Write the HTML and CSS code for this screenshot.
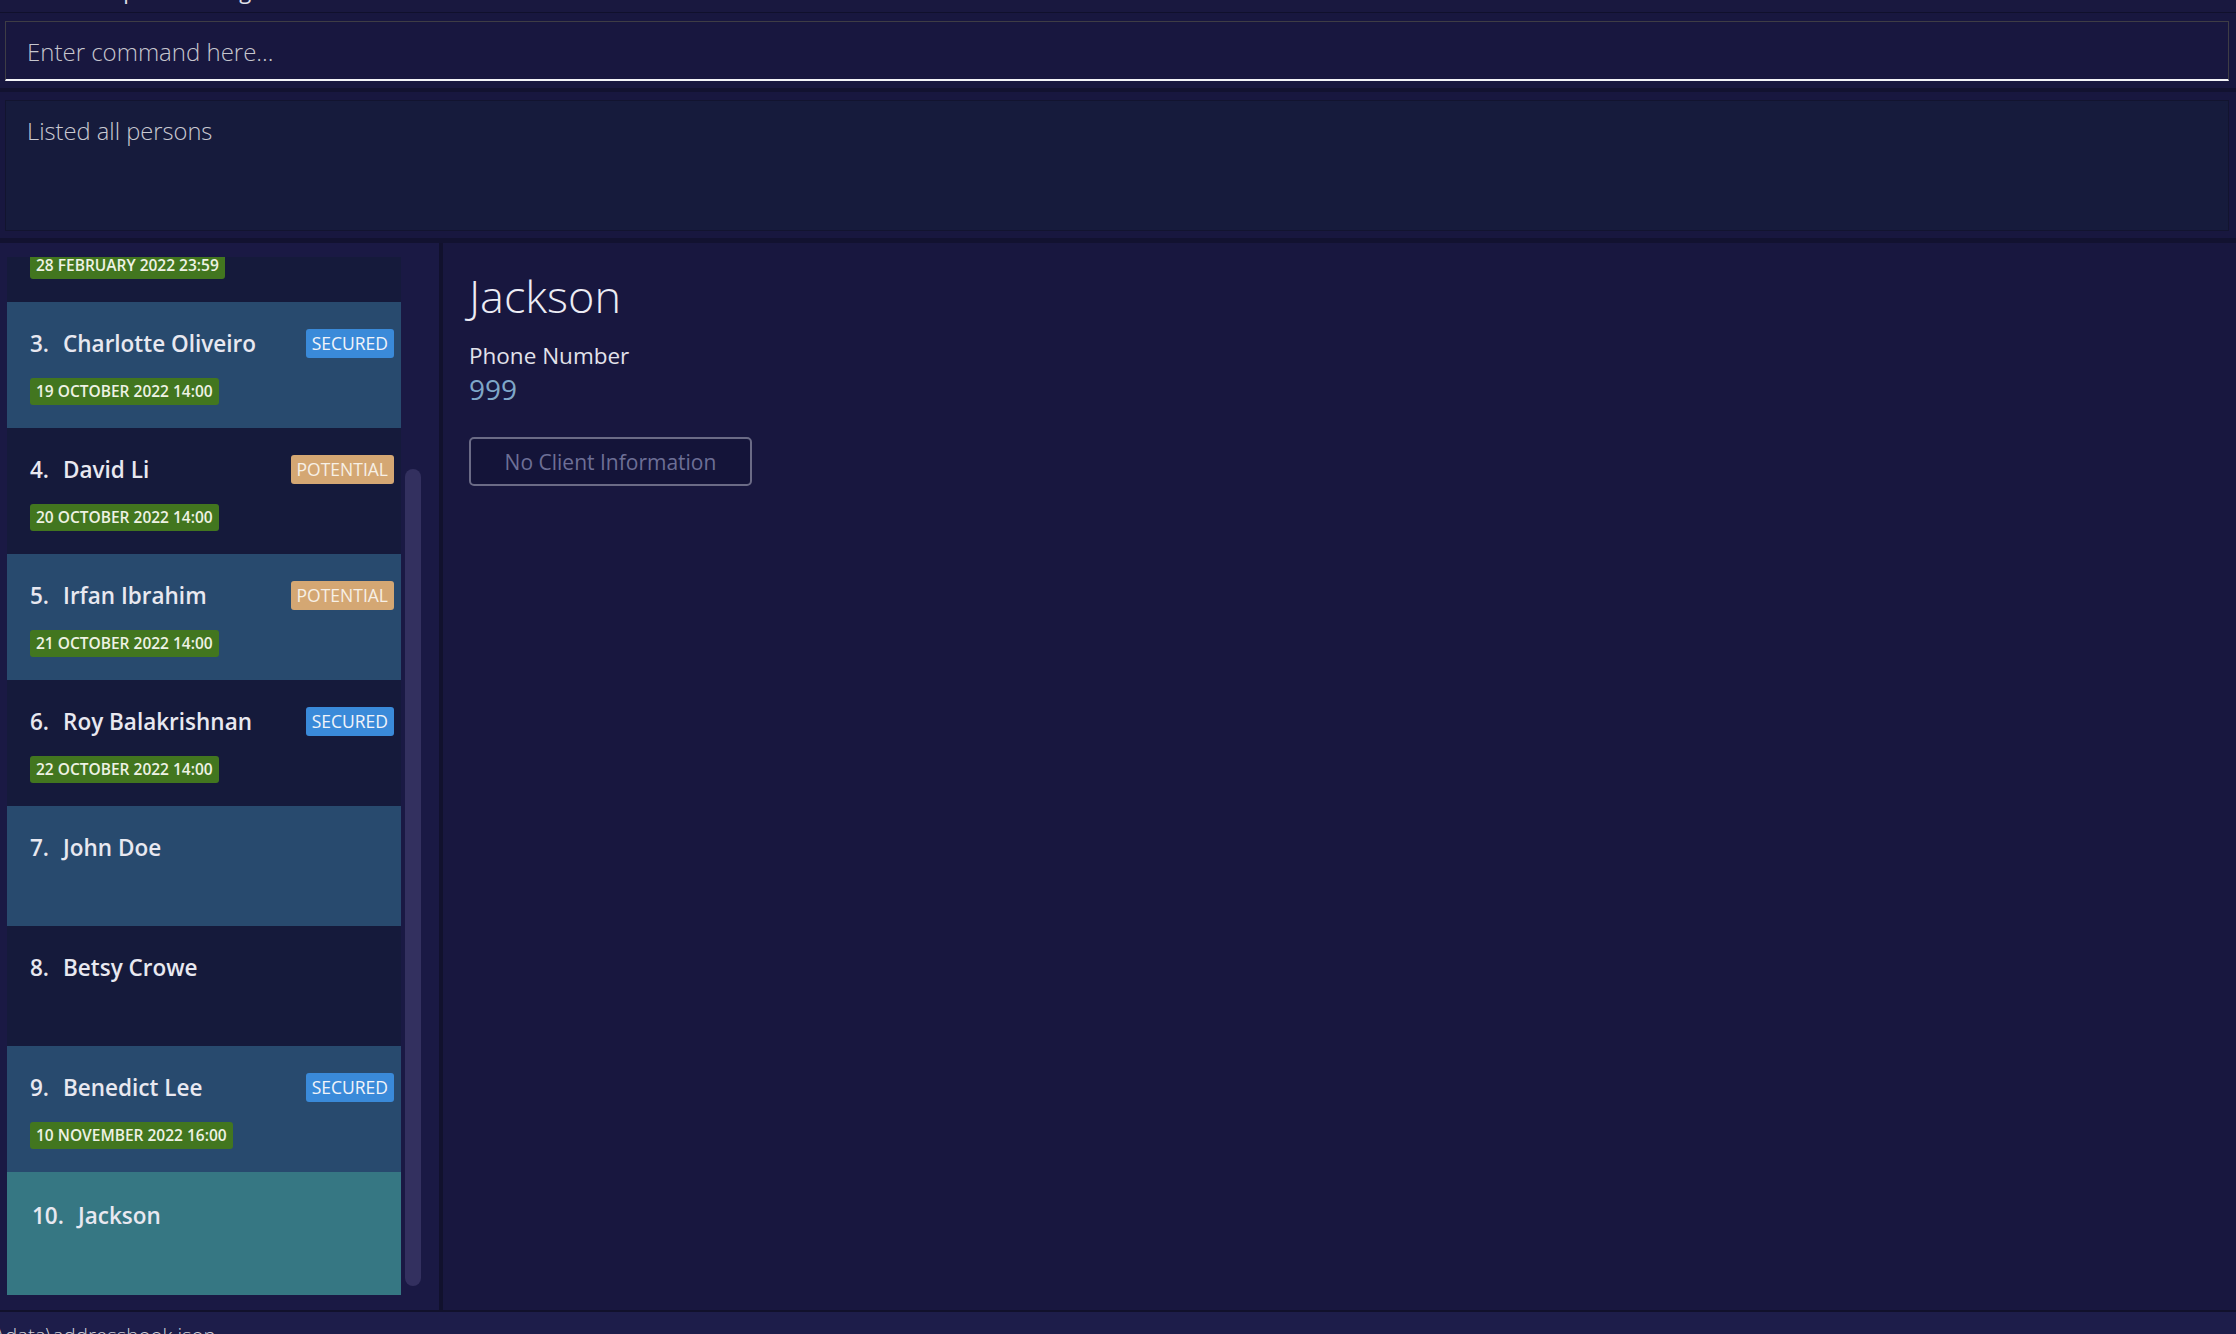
FILE: index.html
```html
<!DOCTYPE html>
<html lang="en">
<head>
<meta charset="utf-8">
<title>Address Book</title>
<link rel="stylesheet" href="styles.css">
</head>
<body>
<div class="app">
  <div class="menubar">
    <span class="menu-item menu-help">Help</span>
    <span class="menu-item menu-settings">Settings</span>
  </div>
  <div class="command-area">
    <div class="command-box"><span class="placeholder">Enter command here...</span></div>
  </div>
  <div class="result-area">
    <div class="result-box">Listed all persons</div>
  </div>
  <div class="main">
    <div class="left-panel">
      <div class="list-viewport">
        <div class="card partial">
          <div class="tags-row"><span class="date">28 FEBRUARY 2022 23:59</span></div>
        </div>
        <div class="card odd">
          <div class="name-row"><span class="num">3.</span><span class="name">Charlotte Oliveiro</span><span class="tag secured">SECURED</span></div>
          <div class="tags-row"><span class="date">19 OCTOBER 2022 14:00</span></div>
        </div>
        <div class="card even">
          <div class="name-row"><span class="num">4.</span><span class="name">David Li</span><span class="tag potential">POTENTIAL</span></div>
          <div class="tags-row"><span class="date">20 OCTOBER 2022 14:00</span></div>
        </div>
        <div class="card odd">
          <div class="name-row"><span class="num">5.</span><span class="name">Irfan Ibrahim</span><span class="tag potential">POTENTIAL</span></div>
          <div class="tags-row"><span class="date">21 OCTOBER 2022 14:00</span></div>
        </div>
        <div class="card even">
          <div class="name-row"><span class="num">6.</span><span class="name">Roy Balakrishnan</span><span class="tag secured">SECURED</span></div>
          <div class="tags-row"><span class="date">22 OCTOBER 2022 14:00</span></div>
        </div>
        <div class="card odd">
          <div class="name-row"><span class="num">7.</span><span class="name">John Doe</span></div>
          <div class="tags-row"></div>
        </div>
        <div class="card even">
          <div class="name-row"><span class="num">8.</span><span class="name">Betsy Crowe</span></div>
          <div class="tags-row"></div>
        </div>
        <div class="card odd">
          <div class="name-row"><span class="num">9.</span><span class="name">Benedict Lee</span><span class="tag secured">SECURED</span></div>
          <div class="tags-row"><span class="date">10 NOVEMBER 2022 16:00</span></div>
        </div>
        <div class="card selected">
          <div class="name-row"><span class="num wide">10.</span><span class="name">Jackson</span></div>
          <div class="tags-row"></div>
        </div>
      </div>
      <div class="scroll-track">
        <div class="scroll-thumb" style="margin-top:212px;height:817px"></div>
      </div>
    </div>
    <div class="divider"></div>
    <div class="detail-panel">
      <div class="detail-name">Jackson</div>
      <div class="detail-label">Phone Number</div>
      <div class="detail-value">999</div>
      <div class="info-button">No Client Information</div>
    </div>
  </div>
  <div class="status-bar"><span class="status-text">\data\addressbook.json</span></div>
</div>
</body>
</html>
```
FILE: styles.css
```css
* { box-sizing: border-box; }
html, body {
  margin: 0;
  padding: 0;
  background: #18173f;
  font-family: "Open Sans", "Noto Sans", "Liberation Sans", sans-serif;
  color: #e6e6f0;
}
.app {
  width: 2236px;
  height: 1334px;
  overflow: hidden;
  display: flex;
  flex-direction: column;
}
.menubar {
  height: 13px;
  flex: none;
  overflow: hidden;
  border-bottom: 1px solid #10102c;
  background: #19183f;
  position: relative;
}
.menu-item {
  position: absolute;
  top: -21px;
  font-size: 22px;
  line-height: 22px;
  color: #e0e0e8;
}
.menu-help { left: 89px; }
.menu-settings { left: 180px; }

.command-area {
  flex: none;
  height: 79px;
  padding: 8px 7px 0 5px;
  border-bottom: 4px solid #121230;
}
.command-box {
  height: 60px;
  border: 1px solid #3e3d45;
  border-bottom: 2px solid #f4f4f8;
  background: #18173f;
  display: flex;
  align-items: center;
  padding-left: 21px;
  padding-top: 2px;
}
.placeholder {
  font-size: 24px;
  font-weight: 300;
  color: #c6c6ce;
}
.result-area {
  flex: none;
  height: 151px;
  padding: 8px 7px 0 5px;
  border-bottom: 5px solid #121230;
}
.result-box {
  height: 131px;
  background: #161b3c;
  border: 1px solid #12142f;
  padding: 13px 21px;
  font-size: 23.7px;
  line-height: 34px;
  font-weight: 300;
  color: #cacad2;
}
.main {
  flex: none;
  height: 1067px;
  display: flex;
}
.left-panel {
  width: 439px;
  flex: none;
  background: #1a1944;
  display: flex;
  padding: 14px 0 0 7px;
}
.list-viewport {
  width: 394px;
  height: 1038px;
  overflow: hidden;
  display: flex;
  flex-direction: column;
  flex: none;
}
.card {
  flex: none;
  padding: 24px 7px 23px 23px;
}
.card.partial {
  margin-top: -5px;
  padding-top: 0;
  background: #151a3b;
}
.card.odd { background: #284a6e; }
.card.even { background: #151a3b; }
.card.selected { background: #367783; padding-top: 26px; padding-left: 25px; height: 123px; }
.name-row {
  height: 34px;
  display: flex;
  align-items: center;
}
.num {
  font-size: 22.5px;
  font-weight: 600;
  margin-right: 14px;
  color: #e8e8f0;
}
.name {
  font-size: 22.5px;
  font-weight: 600;
  color: #e8e8f0;
  flex: 1;
  white-space: nowrap;
}
.tag {
  height: 29px;
  line-height: 29px;
  padding: 0 6px;
  border-radius: 3px;
  font-size: 17.5px;
  color: #f2f4fa;
}
.tag.secured { background: #3a8ad9; }
.tag.potential { background: #d4a773; color: #f7f0e6; }
.tags-row {
  margin-top: 18px;
  min-height: 21px;
  display: flex;
}
.card.partial .tags-row { margin-top: 0; }
.date {
  height: 27px;
  line-height: 27px;
  padding: 0 6px;
  border-radius: 3px;
  background: #42761f;
  font-size: 15.5px;
  font-weight: 600;
  color: #eef2e4;
  white-space: nowrap;
}
.scroll-track {
  width: 16px;
  margin-left: 4px;
  flex: none;
}
.scroll-thumb {
  width: 16px;
  border-radius: 8px;
  background: #33305f;
}
.divider {
  width: 4px;
  flex: none;
  background: #11112d;
}
.detail-panel {
  flex: 1;
  background: #18173f;
  padding: 23px 26px;
}
.detail-name {
  font-size: 45px;
  line-height: 60px;
  font-weight: 300;
  color: #ececf4;
}
.detail-label {
  margin-top: 15px;
  font-size: 22.5px;
  line-height: 30px;
  font-weight: 500;
  color: #e2e2ea;
}
.detail-value {
  font-size: 28px;
  line-height: 36px;
  font-weight: 400;
  color: #7fa7c9;
}
.info-button {
  margin-top: 30px;
  width: 283px;
  height: 49px;
  border: 2px solid #6b6b86;
  border-radius: 5px;
  background: #141439;
  display: flex;
  align-items: center;
  justify-content: center;
  font-size: 21px;
  color: #6d6f96;
}
.status-bar {
  flex: 1;
  border-top: 2px solid #11112c;
  background: #1d1d4a;
  overflow: hidden;
  padding-top: 9px;
}
.status-text {
  font-size: 20.5px;
  line-height: 28px;
  font-weight: 300;
  color: #d0d0d8;
  margin-left: -2px;
}
```
